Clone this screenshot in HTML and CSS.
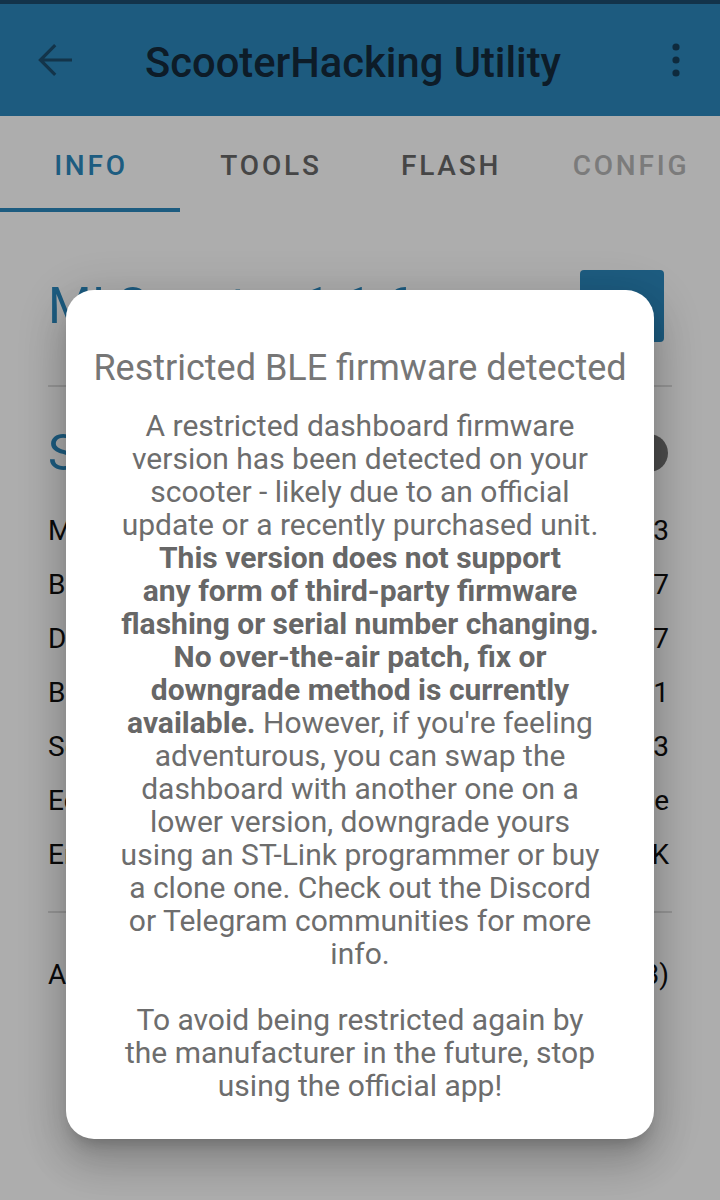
FILE: index.html
```html
<!DOCTYPE html>
<html>
<head>
<meta charset="utf-8">
<link rel="stylesheet" href="styles.css">
</head>
<body>
<div class="screen">
  <div class="status"></div>
  <header class="appbar">
    <svg class="back" viewBox="0 0 24 24" width="48" height="48"><path d="M20 12H4.8M11.6 4.6L4.2 12l7.4 7.4" fill="none" stroke="currentColor" stroke-width="1.6"/></svg>
    <div class="title">ScooterHacking Utility</div>
    <svg class="more" viewBox="0 0 24 24" width="48" height="48"><circle cx="12" cy="5.5" r="1.8"/><circle cx="12" cy="12" r="1.8"/><circle cx="12" cy="18.5" r="1.8"/></svg>
  </header>
  <nav class="tabs">
    <div class="tab active">INFO</div>
    <div class="tab">TOOLS</div>
    <div class="tab">FLASH</div>
    <div class="tab dim">CONFIG</div>
  </nav>
  <main class="content">
    <div class="head head1">
      <div class="htext">MI Scooter 1.1.6</div>
      <div class="btn"></div>
    </div>
    <div class="divider d1"></div>
    <div class="head head2">
      <div class="htext">Scooter info</div>
      <div class="knob"></div>
    </div>
    <div class="rows">
      <div class="row"><span>Model</span><span>Pro 2 2023</span></div>
      <div class="row"><span>BLE version</span><span>1.5.7</span></div>
      <div class="row"><span>DRV version</span><span>2.4.7</span></div>
      <div class="row"><span>BMS version</span><span>1.2.1</span></div>
      <div class="row"><span>Serial number</span><span>29393/00123</span></div>
      <div class="row"><span>Eco mode</span><span>Unavailable</span></div>
      <div class="row"><span>Encryption</span><span>OK</span></div>
    </div>
    <div class="divider d2"></div>
    <div class="row arow"><span>Activation</span><span>Yes (2023)</span></div>
  </main>
</div>
<div class="scrim"></div>
<div class="dialog">
  <h2 class="dtitle">Restricted BLE firmware detected</h2>
  <p class="dbody">A restricted dashboard firmware<br>version has been detected on your<br>scooter - likely due to an official<br>update or a recently purchased unit.<br><b>This version does not support<br>any form of third-party firmware<br>flashing or serial number changing.<br>No over-the-air patch, fix or<br>downgrade method is currently<br>available.</b> However, if you're feeling<br>adventurous, you can swap the<br>dashboard with another one on a<br>lower version, downgrade yours<br>using an ST-Link programmer or buy<br>a clone one. Check out the Discord<br>or Telegram communities for more<br>info.<br><br>To avoid being restricted again by<br>the manufacturer in the future, stop<br>using the official app!</p>
</div>
</body>
</html>
```

FILE: styles.css
```css
html, body {
  margin: 0;
  padding: 0;
}
body {
  width: 720px;
  height: 1200px;
  overflow: hidden;
  background: #ffffff;
  font-family: Roboto, "Noto Sans", sans-serif;
  position: relative;
}
.screen {
  display: flex;
  flex-direction: column;
}
.status {
  height: 4px;
  background: #1d4c6d;
}
.appbar {
  height: 112px;
  box-sizing: border-box;
  padding: 4px 20px 0 32px;
  background: #2b87bb;
  display: flex;
  align-items: center;
}
.back {
  color: #1c4d6d;
  flex: none;
  margin-top: -4px;
}
.title {
  margin-left: 65px;
  font-size: 41.7px;
  font-weight: 500;
  color: #142a3c;
  flex: 1;
}
.more {
  fill: #153e5a;
  flex: none;
  margin-top: -4px;
}
.tabs {
  display: grid;
  grid-template-columns: repeat(4, 180px);
  height: 96px;
}
.tab {
  display: flex;
  align-items: center;
  justify-content: center;
  font-size: 28px;
  font-weight: 500;
  letter-spacing: 2.8px;
  padding: 2px 0 0 2px;
  color: #686868;
}
.tab.active {
  color: #2b88bd;
  box-shadow: inset 0 -4px 0 #2b88bd;
}
.tab.dim {
  color: #b6b6b6;
}
.content {
  padding: 0 48px;
  display: flex;
  flex-direction: column;
}
.head {
  display: flex;
  align-items: center;
  justify-content: space-between;
}
.head1 {
  margin-top: 58px;
  height: 72px;
}
.htext {
  font-size: 50px;
  color: #2b88bd;
}
.btn {
  width: 84px;
  height: 72px;
  border-radius: 4px;
  background: #2b88bd;
  margin-right: 8px;
}
.divider {
  height: 2px;
  background: #dedede;
}
.d1 {
  margin-top: 43px;
}
.head2 {
  margin-top: 44px;
  height: 44px;
}
.knob {
  width: 38px;
  height: 38px;
  border-radius: 50%;
  background: #727272;
  margin-right: 4px;
}
.rows {
  margin-top: 28px;
  display: flex;
  flex-direction: column;
}
.row {
  height: 54px;
  display: flex;
  align-items: center;
  justify-content: space-between;
  font-size: 28px;
  color: #111;
  padding-right: 3px;
}
.d2 {
  margin-top: 30px;
}
.arow {
  margin-top: 34px;
}
.scrim {
  position: absolute;
  inset: 0;
  background: rgba(0, 0, 0, 0.32);
}
.dialog {
  position: absolute;
  left: 66px;
  top: 290px;
  width: 588px;
  height: 849px;
  box-sizing: border-box;
  background: #ffffff;
  border-radius: 28px;
  text-align: center;
  padding-top: 56px;
  box-shadow: 0 11px 15px -7px rgba(0,0,0,0.2), 0 24px 38px 3px rgba(0,0,0,0.14), 0 9px 46px 8px rgba(0,0,0,0.12);
}
.dtitle {
  margin: 0;
  font-size: 36px;
  line-height: 44px;
  font-weight: 400;
  color: #767676;
}
.dbody {
  margin: 19px 0 0;
  font-size: 30px;
  line-height: 33px;
  color: #6d6d6d;
}
.dbody b {
  font-weight: 700;
  color: #676767;
}
```
